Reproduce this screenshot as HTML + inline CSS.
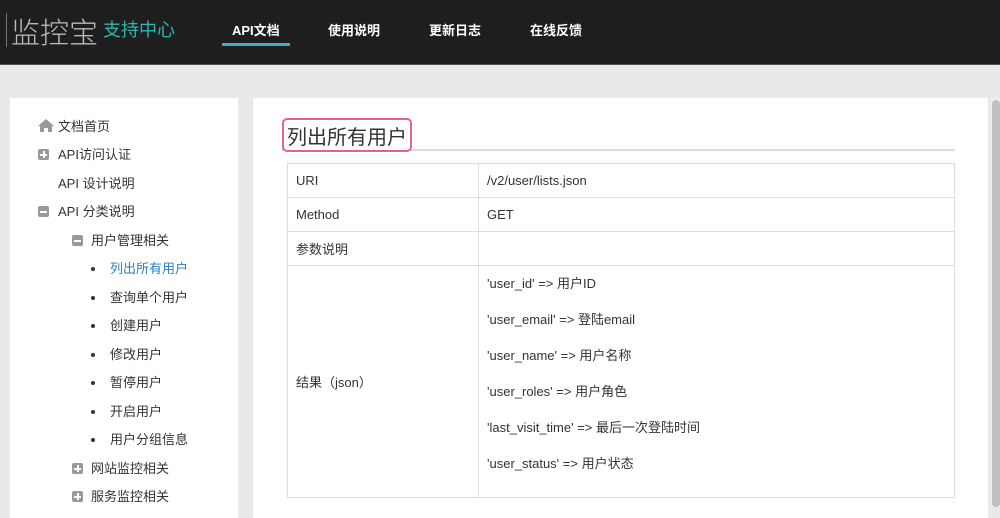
<!DOCTYPE html>
<html><head><meta charset="utf-8"><style>
*{margin:0;padding:0;box-sizing:border-box}
body{width:1000px;height:507px;overflow:hidden;background:#e9e9e9;font-family:"Liberation Sans","Noto Sans CJK SC",sans-serif;font-size:13px;color:#333;position:relative}
.hdr{position:absolute;left:0;top:0;width:1000px;height:65px;background:#1e1e1e;border-bottom:1px solid #555}
.abs{position:absolute;white-space:nowrap}
.nav{color:#fff;font-size:13px;font-weight:bold;top:20px}
.side{position:absolute;left:10px;top:98px;width:228px;height:420px;background:#fff}
.main{position:absolute;left:253px;top:98px;width:735px;height:420px;background:#fff}
.it{position:absolute;font-size:13px;color:#333;white-space:nowrap;margin-top:-2px}
.ic{position:absolute;width:11px;height:11px;background:#999;border-radius:2px}
.ic:after{content:"";position:absolute;left:2px;top:4.5px;width:7px;height:2px;background:#fff}
.ic.p:before{content:"";position:absolute;left:4.5px;top:2px;width:2px;height:7px;background:#fff}
.dot{position:absolute;width:4px;height:4px;border-radius:50%;background:#333}
table{position:absolute;left:287px;top:163px;width:668px;border-collapse:collapse;font-size:13px}
td{border:1px solid #ddd;padding:0 8px;vertical-align:middle;color:#333}
</style></head><body>
<div class="hdr">
<div class="abs" style="left:6px;top:13px;width:1px;height:34px;background:#777"></div>
<div class="abs" style="left:11px;top:10px;font-size:29px;color:#bbb;font-family:'Noto Sans CJK SC',sans-serif;font-weight:300">监控宝</div>
<div class="abs" style="left:103px;top:16px;font-size:18px;color:#2ab8b0">支持中心</div>
<div class="abs nav" style="left:232px">API文档</div>
<div class="abs" style="left:222px;top:43px;width:68px;height:3px;background:#47a6cc"></div>
<div class="abs nav" style="left:328px">使用说明</div>
<div class="abs nav" style="left:429px">更新日志</div>
<div class="abs nav" style="left:530px">在线反馈</div>
</div>
<div class="side"></div>
<div class="main"></div>
<div class="abs" style="left:991px;top:98px;width:9px;height:409px;background:#f0f0f0"></div>
<div class="abs" style="left:992px;top:100px;width:8px;height:407px;background:#c0c0c0;border-radius:4px"></div>

<svg class="abs" style="left:38px;top:119px" width="16" height="13" viewBox="0 0 16 13"><path d="M8 0L0 7h2v6h4V9h4v4h4V7h2z" fill="#999"/></svg>
<div class="it" style="left:58px;top:118px">文档首页</div>
<div class="ic p" style="left:38px;top:149px"></div><div class="it" style="left:58px;top:146px">API访问认证</div>
<div class="it" style="left:58px;top:175px">API 设计说明</div>
<div class="ic" style="left:38px;top:206px"></div><div class="it" style="left:58px;top:203px">API 分类说明</div>
<div class="ic" style="left:72px;top:235px"></div><div class="it" style="left:91px;top:232px">用户管理相关</div>
<div class="dot" style="left:91px;top:267px"></div><div class="it" style="left:110px;top:260px;color:#2a7fc1">列出所有用户</div>
<div class="dot" style="left:91px;top:296px"></div><div class="it" style="left:110px;top:289px">查询单个用户</div>
<div class="dot" style="left:91px;top:324px"></div><div class="it" style="left:110px;top:317px">创建用户</div>
<div class="dot" style="left:91px;top:353px"></div><div class="it" style="left:110px;top:346px">修改用户</div>
<div class="dot" style="left:91px;top:381px"></div><div class="it" style="left:110px;top:374px">暂停用户</div>
<div class="dot" style="left:91px;top:410px"></div><div class="it" style="left:110px;top:403px">开启用户</div>
<div class="dot" style="left:91px;top:438px"></div><div class="it" style="left:110px;top:431px">用户分组信息</div>
<div class="ic p" style="left:72px;top:463px"></div><div class="it" style="left:91px;top:460px">网站监控相关</div>
<div class="ic p" style="left:72px;top:491px"></div><div class="it" style="left:91px;top:488px">服务监控相关</div>

<div class="abs" style="left:282px;top:149px;width:673px;height:2px;background:#ddd"></div>
<div class="abs" style="left:282px;top:118px;width:130px;height:34px;border:2px solid #e0629a;border-radius:5px;background:#fff"></div>
<div class="abs" style="left:287px;top:121px;font-size:20px;color:#333">列出所有用户</div>

<table>
<tr style="height:34px"><td style="width:191px">URI</td><td>/v2/user/lists.json</td></tr>
<tr style="height:34px"><td>Method</td><td>GET</td></tr>
<tr style="height:34px"><td>参数说明</td><td></td></tr>
<tr style="height:232px"><td>结果（json）</td><td style="vertical-align:top;padding-top:0px;line-height:36px">'user_id' =&gt; 用户ID<br>'user_email' =&gt; 登陆email<br>'user_name' =&gt; 用户名称<br>'user_roles' =&gt; 用户角色<br>'last_visit_time' =&gt; 最后一次登陆时间<br>'user_status' =&gt; 用户状态</td></tr>
</table>
</body></html>
